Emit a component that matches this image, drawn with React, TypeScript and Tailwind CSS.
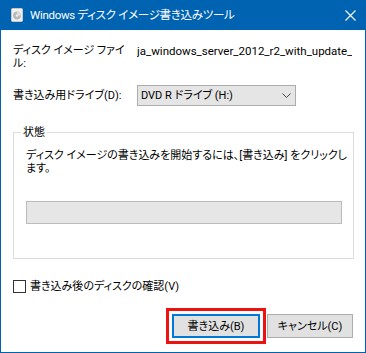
function DiscIcon() {
  return (
    <svg width="12" height="14" viewBox="0 0 12 14">
      <rect x="0.5" y="0.5" width="11" height="13" rx="1" fill="#f2f2f2" stroke="#c8c8c8" />
      <circle cx="6" cy="7.5" r="4" fill="#b9b9b9" />
      <circle cx="6" cy="7.5" r="1.2" fill="#f2f2f2" />
      <path d="M6 3.5 A4 4 0 0 1 10 7.5 L6 7.5 Z" fill="#dedede" />
    </svg>
  );
}

export default function App() {
  return (
    <div className="flex h-[353px] w-[366px] flex-col bg-white font-['Roboto','Noto_Sans_CJK_JP',sans-serif] text-[11.5px] leading-[13px] text-[#000] [font-feature-settings:'palt']">
      {/* title bar */}
      <div className="flex h-[30px] shrink-0 items-center bg-[#0063b1] text-white">
        <div className="ml-[11px] mr-[7px] flex items-center">
          <DiscIcon />
        </div>
        <span className="whitespace-nowrap tracking-[-0.3px]">Windows ディスク イメージ書き込みツール</span>
        <div className="ml-auto mr-[10px] flex items-center">
          <svg width="11" height="11" viewBox="0 0 11 11" stroke="white" strokeWidth="1.1">
            <path d="M0.5 0.5 L10.5 10.5 M10.5 0.5 L0.5 10.5" />
          </svg>
        </div>
      </div>

      {/* body */}
      <div className="flex flex-1 flex-col border-x border-b border-[#0063b1] pl-[12px] pr-[12px] pt-[14px] text-[11px]">
        <div className="flex">
          <div className="w-[124px] shrink-0 whitespace-nowrap">
            ディスク イメージ ファイ
            <br />
            ル:
          </div>
          <div className="mt-[1px] overflow-hidden whitespace-nowrap text-[11.5px]">ja_windows_server_2012_r2_with_update_</div>
        </div>

        <div className="mt-[15px] flex items-center">
          <div className="w-[124px] shrink-0 whitespace-nowrap">書き込み用ドライブ(D):</div>
          <div className="flex h-[21px] w-[159px] items-center border border-[#adadad] bg-[#e5e5e5] pl-[3px] pr-[4px]">
            <span className="whitespace-nowrap">DVD R ドライブ (H:)</span>
            <svg className="ml-auto" width="9" height="5" viewBox="0 0 9 5" fill="none" stroke="#444" strokeWidth="1">
              <path d="M0.5 0.5 L4.5 4.5 L8.5 0.5" />
            </svg>
          </div>
        </div>

        {/* group box */}
        <div className="relative mt-[26px] h-[127px] w-[341px] border border-[#dcdcdc] pl-[12px] pt-[16px]">
          <span className="absolute -top-[7px] left-[7px] bg-white px-[2px]">状態</span>
          <div className="whitespace-nowrap">
            ディスク イメージの書き込みを開始するには、[書き込み] をクリックし
            <br />
            ます。
          </div>
          <div className="mt-[26px] h-[23px] w-[316px] border border-[#bcbcbc] bg-[#e6e6e6]" />
        </div>

        <div className="mt-[21px] flex items-center">
          <div className="h-[13px] w-[13px] border border-[#333]" />
          <span className="ml-[4px] whitespace-nowrap">書き込み後のディスクの確認(V)</span>
        </div>

        <div className="mt-[15px] flex items-start justify-end">
          <div className="border-[3px] border-[#ee1111] p-[3px]">
            <button className="flex h-[24px] w-[88px] items-center justify-center border-2 border-[#0078d7] bg-[#e1e1e1]">
              書き込み(B)
            </button>
          </div>
          <button className="ml-[1px] mt-[6px] flex h-[24px] w-[86px] items-center justify-center border border-[#adadad] bg-[#e1e1e1]">
            キャンセル(C)
          </button>
        </div>
      </div>
    </div>
  );
}
